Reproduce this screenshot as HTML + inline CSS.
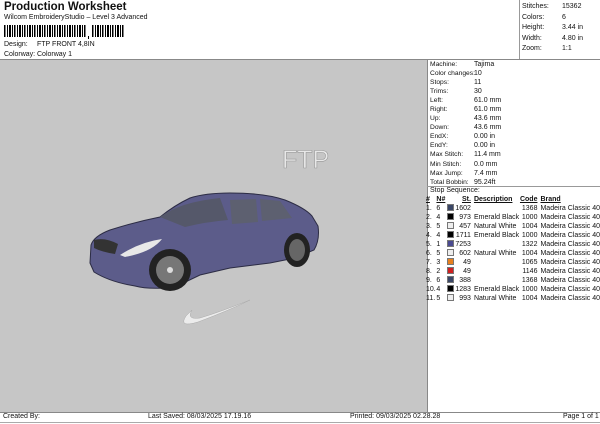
<!DOCTYPE html><html><head><style>
*{margin:0;padding:0;box-sizing:border-box}
body{width:600px;height:424px;background:#fff;font-family:"Liberation Sans",sans-serif;font-size:7px;color:#111;position:relative;overflow:hidden}
.a{position:absolute;white-space:nowrap}
.r td{padding:0;height:9px;line-height:9px;white-space:nowrap}
.sw{display:inline-block;width:7px;height:7px;vertical-align:-1px;border:1px solid #777}
</style></head><body>
<div class="a" style="left:4px;top:1px;font-size:11.5px;font-weight:bold">Production Worksheet</div>
<div class="a" style="left:4px;top:14px">Wilcom EmbroideryStudio – Level 3 Advanced</div>
<svg class="a" style="left:4px;top:25px" width="122" height="14">
<g fill="#000">
<rect x="0" y="0" width="1.5" height="12"/><rect x="3" width="1" height="12"/><rect x="5" width="2" height="12"/><rect x="8" width="1" height="12"/><rect x="10" width="1.5" height="12"/><rect x="13" width="1" height="12"/><rect x="15" width="2" height="12"/><rect x="18" width="1" height="12"/><rect x="20" width="1.5" height="12"/><rect x="23" width="1" height="12"/><rect x="25" width="2" height="12"/><rect x="28" width="1" height="12"/><rect x="30" width="1.5" height="12"/><rect x="33" width="1" height="12"/><rect x="35" width="2" height="12"/><rect x="38" width="1" height="12"/><rect x="40" width="1.5" height="12"/><rect x="43" width="1" height="12"/><rect x="45" width="2" height="12"/><rect x="48" width="1" height="12"/><rect x="50" width="1.5" height="12"/><rect x="53" width="1" height="12"/><rect x="55" width="2" height="12"/><rect x="58" width="1" height="12"/><rect x="60" width="1.5" height="12"/><rect x="63" width="1" height="12"/><rect x="65" width="2" height="12"/><rect x="68" width="1" height="12"/><rect x="70" width="1.5" height="12"/><rect x="73" width="1" height="12"/><rect x="75" width="2" height="12"/><rect x="78" width="1" height="12"/><rect x="80" width="1.5" height="12"/><rect x="84" y="11" width="1" height="3"/><rect x="88" width="1.5" height="12"/><rect x="91" width="1" height="12"/><rect x="93" width="2" height="12"/><rect x="96" width="1" height="12"/><rect x="98" width="1.5" height="12"/><rect x="101" width="1" height="12"/><rect x="103" width="2" height="12"/><rect x="106" width="1" height="12"/><rect x="108" width="1.5" height="12"/><rect x="111" width="1" height="12"/><rect x="113" width="2" height="12"/><rect x="116" width="1" height="12"/><rect x="118" width="1.5" height="12"/></g></svg>
<div class="a" style="left:4px;top:41px">Design:</div><div class="a" style="left:37px;top:41px">FTP FRONT 4,8IN</div>
<div class="a" style="left:4px;top:51px">Colorway:</div><div class="a" style="left:37px;top:51px">Colorway 1</div>
<div class="a" style="left:519px;top:0;width:81px;height:59px;border-left:1px solid #999"></div>
<div class="a" style="left:522px;top:2px;line-height:10.6px">Stitches:<br>Colors:<br>Height:<br>Width:<br>Zoom:</div>
<div class="a" style="left:562px;top:2px;line-height:10.6px">15362<br>6<br>3.44 in<br>4.80 in<br>1:1</div>
<div class="a" style="left:0;top:59px;width:600px;border-top:1px solid #888"></div>
<div class="a" style="left:0;top:60px;width:424px;height:352px;background:#c6c6c6"></div>
<div class="a" style="left:424px;top:60px;width:3px;height:352px;background:#c6c6c6"></div>
<div class="a" style="left:427px;top:60px;width:173px;height:352px;border-left:1px solid #888"></div>
<div class="a" style="left:430px;top:60px;line-height:9.05px;font-size:6.7px">Machine:<br>Color changes:<br>Stops:<br>Trims:<br>Left:<br>Right:<br>Up:<br>Down:<br>EndX:<br>EndY:<br>Max Stitch:<br>Min Stitch:<br>Max Jump:<br>Total Bobbin:</div>
<div class="a" style="left:474px;top:60px;line-height:9.05px">Tajima<br>10<br>11<br>30<br>61.0 mm<br>61.0 mm<br>43.6 mm<br>43.6 mm<br>0.00 in<br>0.00 in<br>11.4 mm<br>0.0 mm<br>7.4 mm<br>95.24ft</div>
<div class="a" style="left:427px;top:186px;width:173px;border-top:1px solid #999"></div>
<div class="a" style="left:430px;top:187px">Stop Sequence:</div>
<table class="a r" style="left:426px;top:195px;border-collapse:collapse;font-size:7px">
<tr style="font-weight:bold;text-decoration:underline"><td style="width:11px">#</td><td style="width:11px">N#</td><td style="width:10px"></td><td style="width:16px;text-align:right">St.</td><td style="width:44px;padding-left:3px">Description</td><td style="width:19px;text-align:right">Code</td><td style="padding-left:3px">Brand</td></tr>
<tr><td>1.</td><td>6</td><td><span class="sw" style="background:#3a4666"></span></td><td align="right">1602</td><td></td><td align="right">1368</td><td style="padding-left:3px">Madeira Classic 40</td></tr>
<tr><td>2.</td><td>4</td><td><span class="sw" style="background:#000"></span></td><td align="right">973</td><td style="padding-left:3px">Emerald Black</td><td align="right">1000</td><td style="padding-left:3px">Madeira Classic 40</td></tr>
<tr><td>3.</td><td>5</td><td><span class="sw" style="background:#eee"></span></td><td align="right">457</td><td style="padding-left:3px">Natural White</td><td align="right">1004</td><td style="padding-left:3px">Madeira Classic 40</td></tr>
<tr><td>4.</td><td>4</td><td><span class="sw" style="background:#000"></span></td><td align="right">1711</td><td style="padding-left:3px">Emerald Black</td><td align="right">1000</td><td style="padding-left:3px">Madeira Classic 40</td></tr>
<tr><td>5.</td><td>1</td><td><span class="sw" style="background:#4a4a90"></span></td><td align="right">7253</td><td></td><td align="right">1322</td><td style="padding-left:3px">Madeira Classic 40</td></tr>
<tr><td>6.</td><td>5</td><td><span class="sw" style="background:#eee"></span></td><td align="right">602</td><td style="padding-left:3px">Natural White</td><td align="right">1004</td><td style="padding-left:3px">Madeira Classic 40</td></tr>
<tr><td>7.</td><td>3</td><td><span class="sw" style="background:#e8801e"></span></td><td align="right">49</td><td></td><td align="right">1065</td><td style="padding-left:3px">Madeira Classic 40</td></tr>
<tr><td>8.</td><td>2</td><td><span class="sw" style="background:#d02020"></span></td><td align="right">49</td><td></td><td align="right">1146</td><td style="padding-left:3px">Madeira Classic 40</td></tr>
<tr><td>9.</td><td>6</td><td><span class="sw" style="background:#3a4666"></span></td><td align="right">388</td><td></td><td align="right">1368</td><td style="padding-left:3px">Madeira Classic 40</td></tr>
<tr><td>10.</td><td>4</td><td><span class="sw" style="background:#000"></span></td><td align="right">1283</td><td style="padding-left:3px">Emerald Black</td><td align="right">1000</td><td style="padding-left:3px">Madeira Classic 40</td></tr>
<tr><td>11.</td><td>5</td><td><span class="sw" style="background:#eee"></span></td><td align="right">993</td><td style="padding-left:3px">Natural White</td><td align="right">1004</td><td style="padding-left:3px">Madeira Classic 40</td></tr>
</table>
<svg class="a" style="left:80px;top:140px" width="270" height="200" viewBox="0 0 270 200">
<text x="202" y="28" font-family="Liberation Sans" font-size="25" fill="#e8e8e8" stroke="#999" stroke-width="0.6">FTP</text>
<path d="M10 123 L11 105 Q14 96 30 90 Q55 82 80 77 Q95 65 110 58 Q125 53 150 53 Q185 53 205 60 Q225 68 232 76 L238 86 Q240 100 234 110 L215 118 L190 123 L150 128 L120 135 L95 147 Q70 150 55 146 Q30 142 14 132 Z" fill="#5c5c8a" stroke="#2c2c44" stroke-width="1"/>
<path d="M80 77 Q100 62 140 58 L148 80 Q125 82 105 87 Z" fill="#55586a"/>
<path d="M150 60 L176 59 L178 82 L152 84 Z" fill="#5d6070"/>
<path d="M180 59 L200 61 L212 78 L182 81 Z" fill="#5d6070"/>
<path d="M40 115 Q60 102 82 99 Q72 112 45 117 Z" fill="#e8e8e8"/>
<path d="M14 100 Q25 97 38 104 L35 114 Q22 112 14 108 Z" fill="#333"/>
<circle cx="90" cy="130" r="21" fill="#222"/><circle cx="90" cy="130" r="14" fill="#777"/><circle cx="90" cy="130" r="3" fill="#ddd"/>
<ellipse cx="217" cy="110" rx="13" ry="17" fill="#222"/><ellipse cx="217" cy="110" rx="8" ry="11" fill="#666"/>
<path d="M106 176 Q98 188 118 182 Q150 170 170 160 Q140 172 120 178 Q106 180 112 170 Z" fill="#ececec" stroke="#aaa" stroke-width="0.5"/>
</svg>
<div class="a" style="left:0;top:412px;width:600px;border-top:1px solid #888"></div>
<div class="a" style="left:0;top:422px;width:600px;border-top:1px solid #aaa"></div>
<div class="a" style="left:3px;top:413px">Created By:</div>
<div class="a" style="left:148px;top:413px">Last Saved: 08/03/2025 17.19.16</div>
<div class="a" style="left:350px;top:413px">Printed: 09/03/2025 02.28.28</div>
<div class="a" style="left:563px;top:413px">Page 1 of 1</div>
</body></html>
